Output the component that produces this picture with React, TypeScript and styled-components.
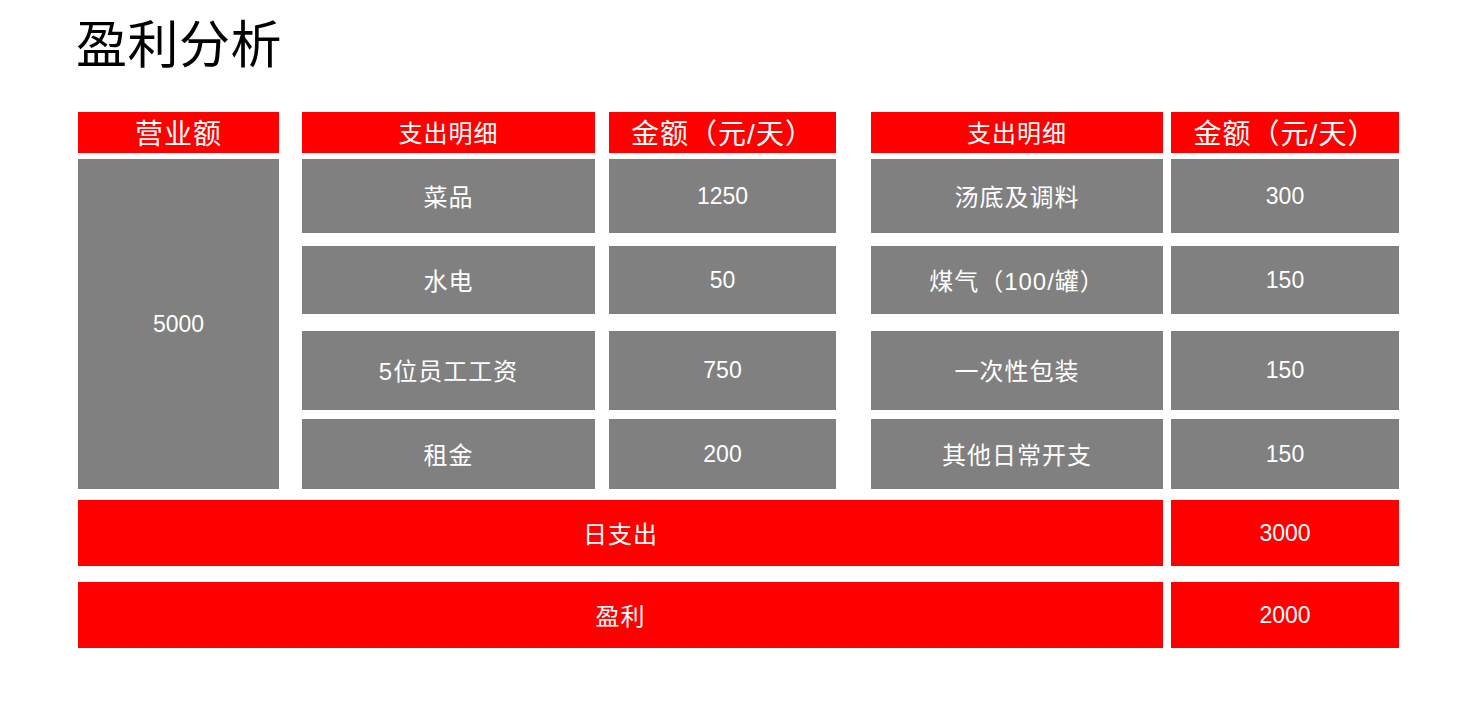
import { createGlobalStyle } from "styled-components";
import styled from "styled-components";

const GlobalStyle = createGlobalStyle`
    body {
        margin: 0;
        background: #ffffff;
        font-family: "Liberation Sans", "Noto Sans CJK SC", sans-serif;
    }
`;

const Page = styled.div`
    padding: 21px 0 0 78px;
`;

const Title = styled.h1`
    margin: 0 0 41px -2px;
    font-size: 51px;
    line-height: 50px;
    font-weight: 400;
    letter-spacing: 0.5px;
    color: #000000;
`;

// spacer tracks between columns / rows keep the uneven gaps of the slide
const Board = styled.div`
    display: grid;
    grid-template-columns: 201px 23px 293px 14px 227px 35px 292px 8px 228px;
    grid-template-rows: 41px 6px 74px 13px 68px 17px 79px 9px 70px 11px 66px 16px 66px;
`;

const Cell = styled.div<{ $col: number; $row: number; $span?: number; $rowSpan?: number; $red?: boolean; $size?: number; $num?: boolean }>`
    grid-column: ${p => p.$col * 2 - 1} / span ${p => (p.$span ? p.$span * 2 - 1 : 1)};
    grid-row: ${p => p.$row * 2 - 1} / span ${p => (p.$rowSpan ? p.$rowSpan * 2 - 1 : 1)};
    display: flex;
    align-items: center;
    justify-content: center;
    padding-bottom: ${p => (p.$num ? 0 : 2)}px;
    box-sizing: border-box;
    background: ${p => (p.$red ? "#ff0000" : "#808080")};
    color: #ffffff;
    font-size: ${p => (p.$num ? 23 : p.$size ?? 24)}px;
    letter-spacing: ${p => (p.$num ? 0 : 1)}px;
    white-space: nowrap;
`;

const left = [
    { name: "菜品", value: "1250" },
    { name: "水电", value: "50" },
    { name: "5位员工工资", value: "750" },
    { name: "租金", value: "200" }
];

const right = [
    { name: "汤底及调料", value: "300" },
    { name: "煤气（100/罐）", value: "150" },
    { name: "一次性包装", value: "150" },
    { name: "其他日常开支", value: "150" }
];

function App() {
    return (
        <>
            <GlobalStyle />
            <Page>
                <Title>盈利分析</Title>
                <Board>
                    <Cell $col={1} $row={1} $red $size={28}>营业额</Cell>
                    <Cell $col={2} $row={1} $red>支出明细</Cell>
                    <Cell $col={3} $row={1} $red $size={28}>金额（元/天）</Cell>
                    <Cell $col={4} $row={1} $red>支出明细</Cell>
                    <Cell $col={5} $row={1} $red $size={28}>金额（元/天）</Cell>

                    <Cell $col={1} $row={2} $rowSpan={4} $num>5000</Cell>

                    {left.map((item, i) => (
                        <>
                            <Cell key={"ln" + i} $col={2} $row={i + 2}>{item.name}</Cell>
                            <Cell key={"lv" + i} $col={3} $row={i + 2} $num>{item.value}</Cell>
                        </>
                    ))}
                    {right.map((item, i) => (
                        <>
                            <Cell key={"rn" + i} $col={4} $row={i + 2}>{item.name}</Cell>
                            <Cell key={"rv" + i} $col={5} $row={i + 2} $num>{item.value}</Cell>
                        </>
                    ))}

                    <Cell $col={1} $row={6} $span={4} $red>日支出</Cell>
                    <Cell $col={5} $row={6} $red $num>3000</Cell>
                    <Cell $col={1} $row={7} $span={4} $red>盈利</Cell>
                    <Cell $col={5} $row={7} $red $num>2000</Cell>
                </Board>
            </Page>
        </>
    );
}

export default App;
